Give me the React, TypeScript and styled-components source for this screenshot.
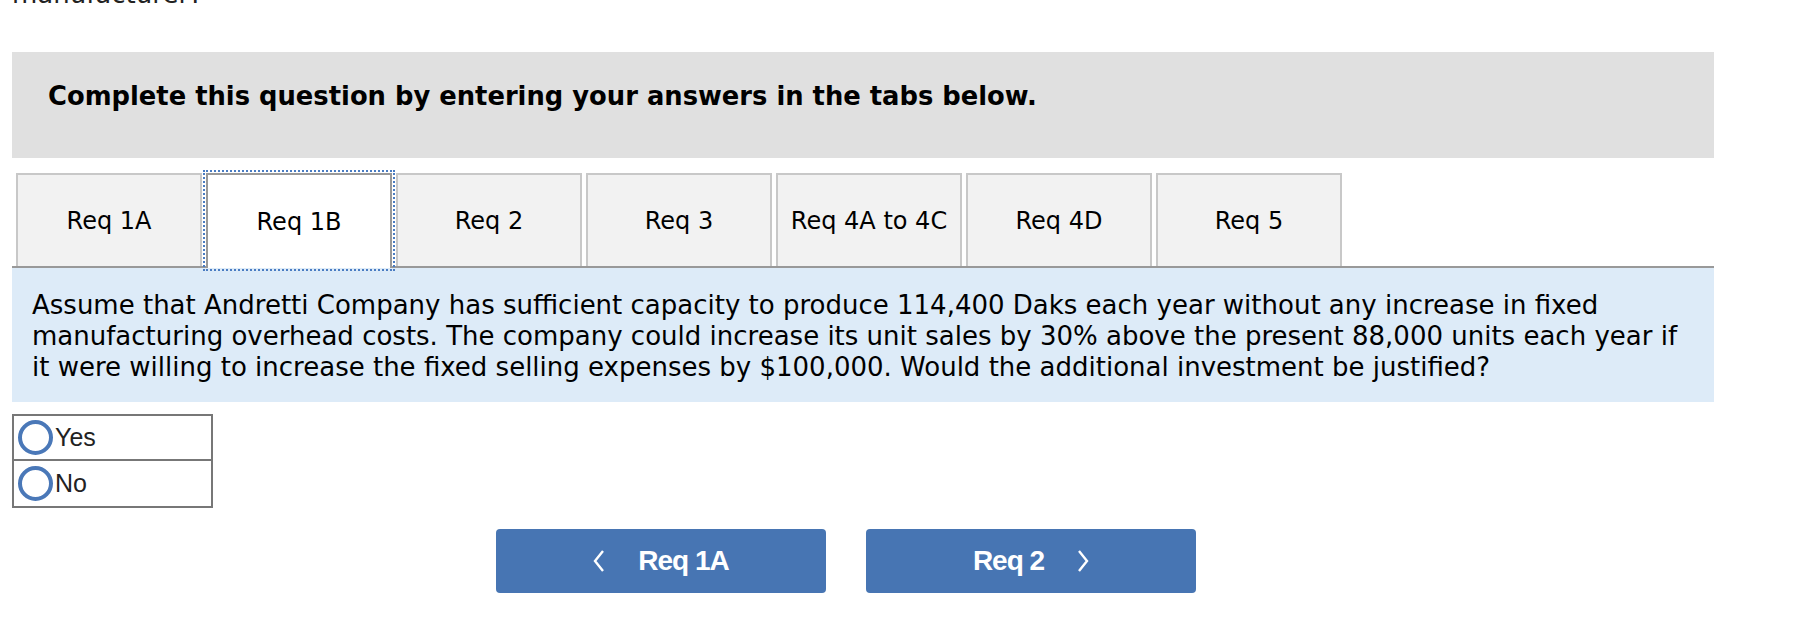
import React, { useState } from "react";
import styled, { createGlobalStyle } from "styled-components";

const GlobalStyle = createGlobalStyle`
  html, body {
    margin: 0;
    padding: 0;
    background: #ffffff;
    overflow: hidden;
  }
  body {
    font-family: "DejaVu Sans", Verdana, sans-serif;
    color: #000;
  }
`;

const Page = styled.div`
  width: 1702px;
  padding-left: 12px;
`;

const Lead = styled.p`
  margin: -21px 0 0 0;
  font-size: 26px;
  line-height: 30px;
  color: #222;
`;

const Banner = styled.div`
  margin-top: 43px;
  height: 106px;
  box-sizing: border-box;
  padding: 29px 36px 0;
  background-color: #e0e0e0;
  font-size: 25.8px;
  line-height: 30px;
  font-weight: bold;
`;

const TabBar = styled.div`
  margin-top: 15px;
  display: flex;
  gap: 4px;
  padding-left: 4px;
  border-bottom: 2px solid #999999;
  height: 93px;
`;

const Tab = styled.button<{ $active?: boolean }>`
  width: 186px;
  height: ${(p) => (p.$active ? "95px" : "93px")};
  box-sizing: border-box;
  display: flex;
  align-items: center;
  justify-content: center;
  padding: 0;
  font-family: "DejaVu Sans", Verdana, sans-serif;
  font-size: 24px;
  color: #000;
  cursor: pointer;
  position: relative;
  z-index: ${(p) => (p.$active ? 1 : 0)};
  background-color: ${(p) => (p.$active ? "#ffffff" : "#f2f2f2")};
  border: 2px solid ${(p) => (p.$active ? "#999999" : "#c8c8c8")};
  border-bottom: none;
  outline: ${(p) => (p.$active ? "2px dotted #4a7cc2" : "none")};
  outline-offset: 1px;
`;

const Question = styled.div`
  background-color: #ddebf8;
  padding: 22px 20px 0;
  font-size: 26px;
  line-height: 31px;
  height: 134px;
  box-sizing: border-box;
  white-space: nowrap;
`;

const Choices = styled.div`
  margin-top: 12px;
  width: 201px;
  box-sizing: border-box;
  border: 2px solid #777777;
`;

const Choice = styled.label<{ $last?: boolean }>`
  display: flex;
  align-items: center;
  height: 45px;
  box-sizing: border-box;
  padding-left: 4px;
  border-bottom: ${(p) => (p.$last ? "none" : "2px solid #777777")};
  cursor: pointer;
`;

const Radio = styled.span<{ $checked?: boolean }>`
  width: 35px;
  height: 35px;
  box-sizing: border-box;
  border-radius: 50%;
  border: 4px solid #4a78b8;
  background: ${(p) => (p.$checked ? "radial-gradient(#4a78b8 45%, #fff 50%)" : "#fff")};
  margin-right: 2px;
  flex-shrink: 0;
`;

const ChoiceText = styled.span`
  font-family: "Liberation Sans", Arial, sans-serif;
  font-size: 25px;
  color: #222;
`;

const NavRow = styled.div`
  margin-top: 21px;
  padding-left: 484px;
  display: flex;
  gap: 40px;
`;

const NavButton = styled.button`
  width: 330px;
  height: 64px;
  border: none;
  border-radius: 4px;
  background-color: #4775b3;
  color: #ffffff;
  display: flex;
  align-items: center;
  justify-content: center;
  gap: 33px;
  font-family: "Liberation Sans", Arial, sans-serif;
  font-weight: bold;
  font-size: 28px;
  letter-spacing: -1px;
  cursor: pointer;
`;

const Chevron = ({ dir }: { dir: "left" | "right" }) => (
  <svg width="12" height="22" viewBox="0 0 12 22">
    <polyline
      points={dir === "left" ? "10,1 2,11 10,21" : "2,1 10,11 2,21"}
      fill="none"
      stroke="#ffffff"
      strokeWidth="2.4"
    />
  </svg>
);

const tabs = ["Req 1A", "Req 1B", "Req 2", "Req 3", "Req 4A to 4C", "Req 4D", "Req 5"];

function App() {
  const [answer, setAnswer] = useState<string | null>(null);
  return (
    <Page>
      <GlobalStyle />
      <Lead>manufacturer?</Lead>
      <Banner>Complete this question by entering your answers in the tabs below.</Banner>
      <TabBar>
        {tabs.map((t) => (
          <Tab key={t} $active={t === "Req 1B"}>
            {t}
          </Tab>
        ))}
      </TabBar>
      <Question>
        Assume that Andretti Company has sufficient capacity to produce 114,400 Daks each year
        without any increase in fixed
        <br />
        manufacturing overhead costs. The company could increase its unit sales by 30% above the
        present 88,000 units each year if
        <br />
        it were willing to increase the fixed selling expenses by $100,000. Would the additional
        investment be justified?
      </Question>
      <Choices>
        {["Yes", "No"].map((c, i) => (
          <Choice key={c} $last={i === 1} onClick={() => setAnswer(c)}>
            <Radio $checked={answer === c} />
            <ChoiceText>{c}</ChoiceText>
          </Choice>
        ))}
      </Choices>
      <NavRow>
        <NavButton>
          <Chevron dir="left" />
          Req 1A
        </NavButton>
        <NavButton>
          Req 2
          <Chevron dir="right" />
        </NavButton>
      </NavRow>
    </Page>
  );
}

export default App;
